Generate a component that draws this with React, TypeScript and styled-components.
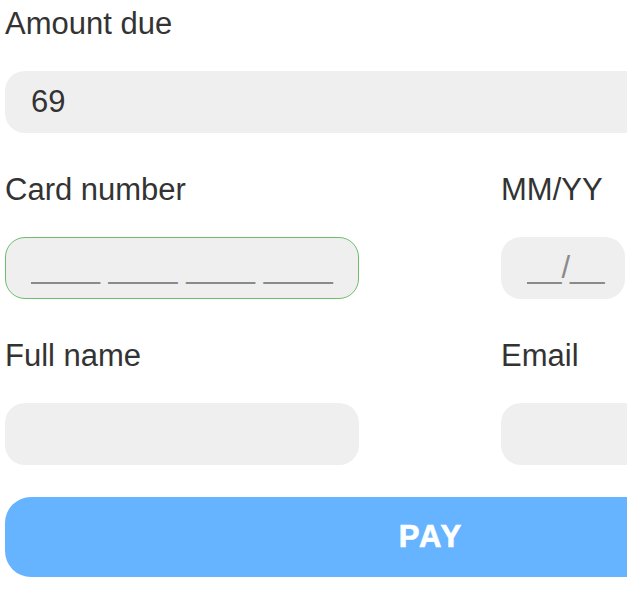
import React from "react";
import styled, { createGlobalStyle } from "styled-components";

const GlobalStyle = createGlobalStyle`
  html, body {
    margin: 0;
    padding: 0;
    overflow: hidden;
    background: #ffffff;
  }
  body {
    font-family: "Liberation Sans", Arial, sans-serif;
  }
`;

const Form = styled.form`
  width: 852px;
  padding: 6px 0 0 5px;
  display: flex;
  flex-direction: column;
  gap: 39px;
`;

const Row = styled.div`
  display: grid;
  grid-template-columns: 354px 1fr;
  column-gap: 142px;
`;

const Field = styled.label<{ $width?: number }>`
  display: flex;
  flex-direction: column;
  gap: 29px;
  width: ${(p) => (p.$width ? `${p.$width}px` : "auto")};
`;

const Label = styled.span`
  font-size: 31px;
  line-height: 36px;
  color: #333333;
  white-space: nowrap;
`;

const Input = styled.input<{ $focused?: boolean }>`
  box-sizing: border-box;
  width: 100%;
  height: 62px;
  padding: 0 0 0 25px;
  border: 1px solid ${(p) => (p.$focused ? "#6dbd6d" : "transparent")};
  border-radius: 20px;
  background: #efefef;
  font-family: "Liberation Sans", Arial, sans-serif;
  font-size: 31px;
  color: #333333;
  outline: none;

  &::placeholder {
    color: #8a8a8a;
    opacity: 1;
  }
`;

const PayButton = styled.button`
  margin-top: -7px;
  height: 80px;
  width: 100%;
  border: none;
  border-radius: 26px;
  background: #66b4ff;
  color: #ffffff;
  font-family: "Liberation Sans", Arial, sans-serif;
  font-weight: 700;
  font-size: 31px;
  letter-spacing: 2px;
  -webkit-text-stroke: 0.7px #ffffff;
  cursor: pointer;
`;

export default function App() {
  return (
    <>
      <GlobalStyle />
      <Form onSubmit={(e) => e.preventDefault()}>
        <Field>
          <Label>Amount due</Label>
          <Input defaultValue="69" />
        </Field>
        <Row>
          <Field>
            <Label>Card number</Label>
            <Input $focused placeholder="____ ____ ____ ____" />
          </Field>
          <Field $width={124}>
            <Label>MM/YY</Label>
            <Input placeholder="__/__" />
          </Field>
        </Row>
        <Row>
          <Field>
            <Label>Full name</Label>
            <Input />
          </Field>
          <Field>
            <Label>Email</Label>
            <Input />
          </Field>
        </Row>
        <PayButton type="submit">PAY</PayButton>
      </Form>
    </>
  );
}
